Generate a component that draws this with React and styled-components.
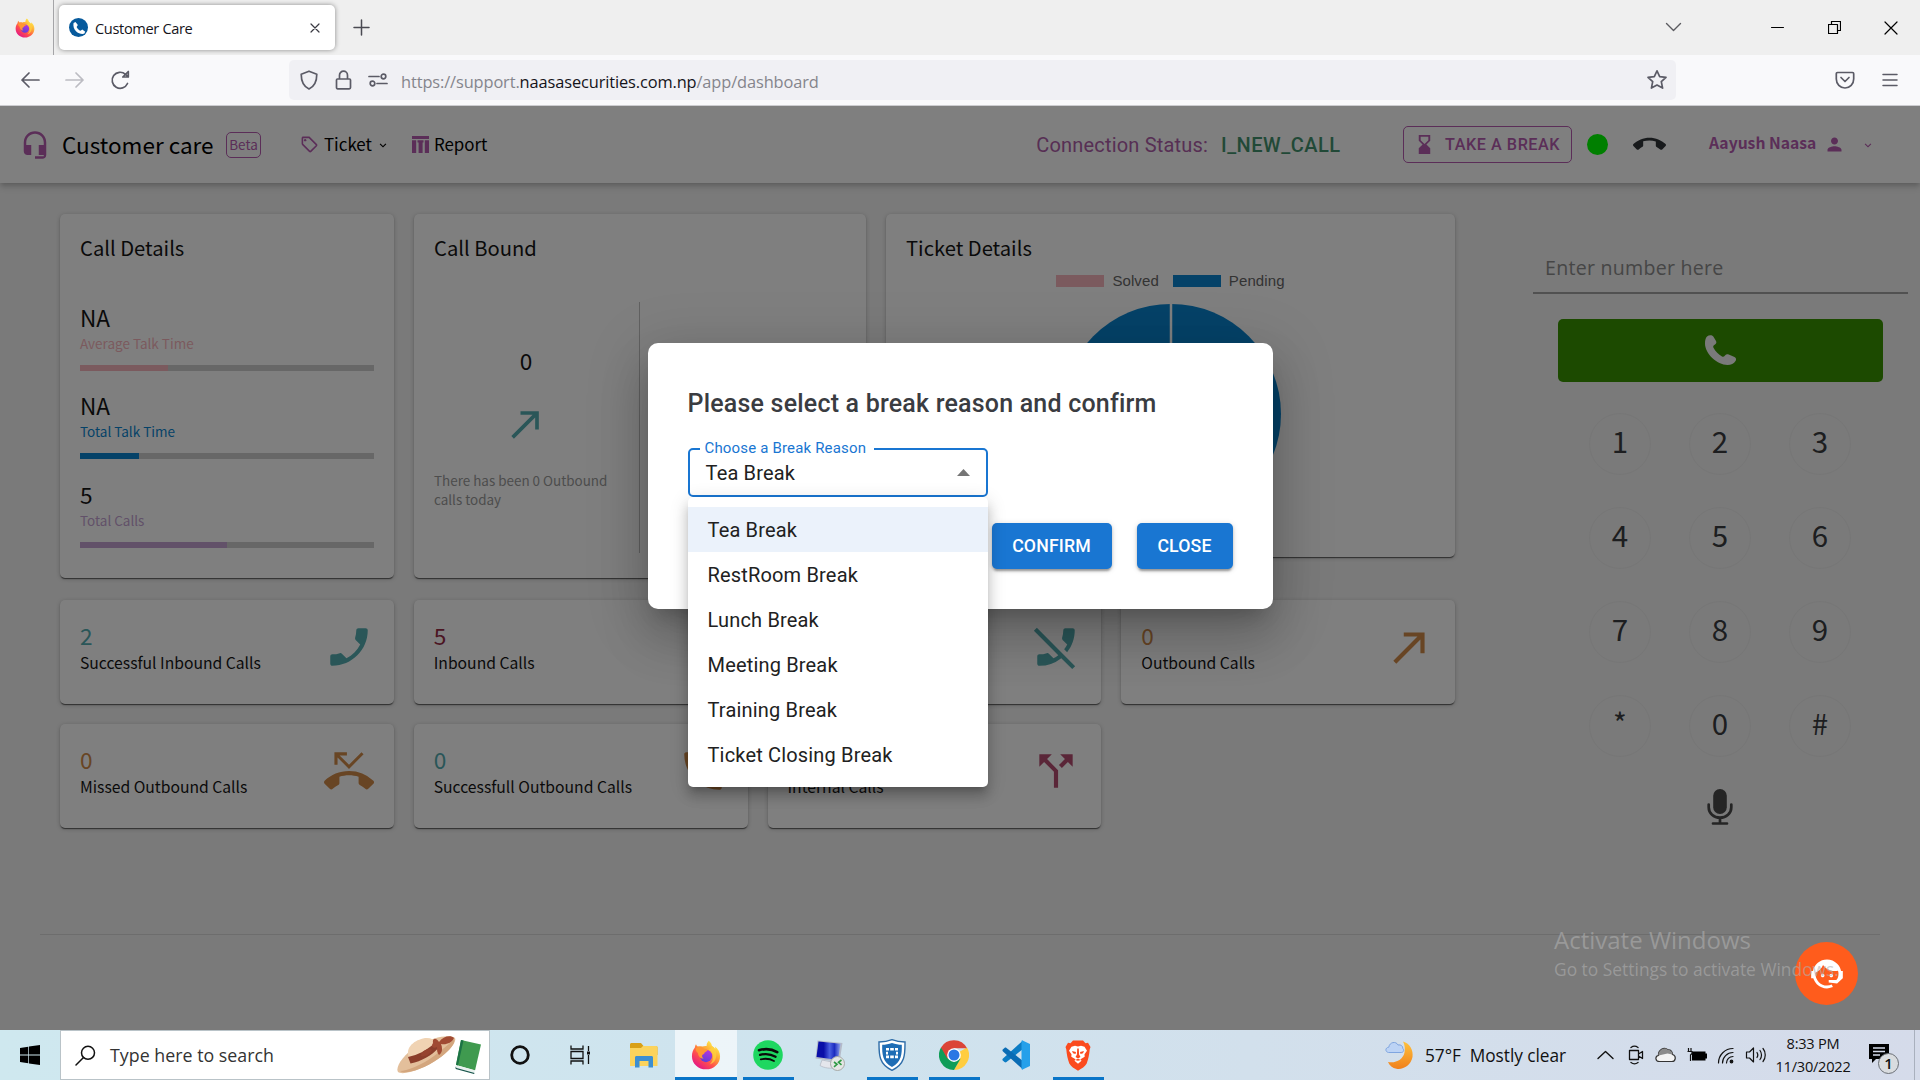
import React from "react";
import styled, { createGlobalStyle, css } from "styled-components";
import {
  MdHeadsetMic, MdOutlineSell, MdHourglassBottom, MdCallEnd, MdPerson, MdCall,
  MdPhoneEnabled, MdPhoneMissed, MdPhoneDisabled, MdCallMade, MdCallReceived,
  MdCallSplit,
} from "react-icons/md";
import { BiChevronDown } from "react-icons/bi";

const SOURCE = `"Noto Sans CJK SC", "Noto Sans", sans-serif`;
const SEGOE = `"Open Sans", "Noto Sans", sans-serif`;
const ROBOTO = `Roboto, "Liberation Sans", sans-serif`;
const PLUM = "#b65cb0";

const GlobalStyle = createGlobalStyle`
  * { box-sizing: border-box; }
  html, body { margin: 0; padding: 0; }
  body { width: 1920px; height: 1080px; overflow: hidden; }
  svg { display: block; flex: none; }
  button { border: 0; padding: 0; margin: 0; background: none; font: inherit; color: inherit; }
`;

const Screen = styled.div`
  width: 1920px;
  height: 1080px;
  display: flex;
  flex-direction: column;
  overflow: hidden;
  font-family: ${SEGOE};
`;

/* ---------- browser ---------- */
const TitleBar = styled.div`
  height: 55px;
  flex: none;
  display: flex;
  align-items: center;
  background: #efefef;
`;
const PinnedTab = styled.div`
  width: 54px;
  height: 55px;
  display: flex;
  align-items: center;
  padding-left: 15px;
  border-right: 1px solid #a5a5a8;
`;
const Tab = styled.div`
  width: 276px;
  height: 45px;
  margin-left: 5px;
  display: flex;
  align-items: center;
  padding: 0 15px 0 10px;
  background: #fff;
  border-radius: 5px;
  box-shadow: 0 0 5px rgba(0, 0, 0, 0.42);
`;
const TabTitle = styled.span`
  flex: 1;
  margin-left: 7px;
  font-size: 14.6px;
  letter-spacing: -0.35px;
  color: #15141a;
  padding-top: 1px;
`;
const NewTab = styled.div`
  margin-left: 18px;
  flex: 1;
`;
const WindowButtons = styled.div`
  display: flex;
  align-items: center;
  padding-right: 22px;
`;
const WinBtn = styled.button`
  margin-left: ${(p) => p.$gap}px;
`;
const NavBar = styled.div`
  height: 51px;
  flex: none;
  display: flex;
  align-items: center;
  background: #f9f9fb;
  border-bottom: 1px solid #ccccd0;
  padding: 0 22px 0 20px;
`;
const NavButtons = styled.div`
  display: flex;
  gap: 25px;
  width: 269px;
`;
const UrlBox = styled.div`
  width: 1387px;
  height: 40px;
  display: flex;
  align-items: center;
  background: #f0f0f4;
  border-radius: 5px;
  padding: 0 8px 0 10px;
  gap: 16px;
`;
const Url = styled.span`
  flex: 1;
  margin-left: -3px;
  padding-top: 2px;
  font-size: 16.4px;
  letter-spacing: -0.12px;
  color: #85858c;
  b { font-weight: 400; color: #15141a; }
`;
const NavRight = styled.div`
  flex: 1;
  display: flex;
  justify-content: flex-end;
  align-items: center;
  gap: 27px;
`;

/* ---------- page ---------- */
const Page = styled.div`
  position: relative;
  height: 924px;
  flex: none;
  display: flex;
  flex-direction: column;
  background: #f4f4f4;
  font-family: ${SOURCE};
  overflow: hidden;
`;
const Header = styled.header`
  height: 77px;
  flex: none;
  display: flex;
  align-items: center;
  background: #fff;
  padding: 0 45px 0 20px;
  box-shadow: 0 2px 5px -1px rgba(0, 0, 0, 0.2), 0 5px 6px rgba(0, 0, 0, 0.1);
  color: #000;
  z-index: 1;
`;
const Brand = styled.div`
  width: 164px;
  margin-left: 12px;
  font-size: 22.5px;
  line-height: 30px;
  padding-bottom: 2px;
`;
const Beta = styled.span`
  width: 35px;
  height: 26px;
  border: 1px solid ${PLUM};
  border-radius: 5px;
  color: ${PLUM};
  font-size: 13.5px;
  line-height: 22px;
  text-align: center;
`;
const MenuLink = styled.div`
  display: flex;
  align-items: center;
  margin-left: ${(p) => p.$ml}px;
  font-size: 16.9px;
  line-height: 24px;
`;
const MenuText = styled.span`
  margin: 0 ${(p) => p.$mr || 0}px 2px 5px;
`;
const Purple = styled.span`
  display: inline-flex;
  color: ${PLUM};
`;
const Status = styled.div`
  margin-left: auto;
  display: flex;
  gap: 13px;
  font-family: ${ROBOTO};
  font-size: 20px;
  color: #ae5ea9;
`;
const StatusLabel = styled.span`
  letter-spacing: 0.18px;
`;
const StatusValue = styled.span`
  width: 119px;
  font-weight: 500;
  letter-spacing: 0.5px;
  color: #43936e;
`;
const BreakButton = styled.button`
  width: 169px;
  height: 37px;
  margin: 0 15px 0 63px;
  padding-left: 9px;
  display: flex;
  align-items: center;
  gap: 9px;
  border: 1px solid ${PLUM};
  border-radius: 5px;
  color: ${PLUM};
  font-family: ${ROBOTO};
  font-size: 16.2px;
  font-weight: 500;
  letter-spacing: 0.55px;
  white-space: nowrap;
`;
const Online = styled.span`
  width: 21px;
  height: 21px;
  border-radius: 50%;
  background: #00ff00;
  margin-right: 25px;
`;
const User = styled.div`
  display: flex;
  align-items: center;
  width: 166px;
  margin-left: 43px;
  color: ${PLUM};
  font-size: 15.7px;
  font-weight: 700;
`;
const UserName = styled.span`
  width: 115px;
  line-height: 22px;
  padding-bottom: 4px;
  white-space: nowrap;
`;
const UserChevron = styled(BiChevronDown)`
  margin-left: 16px;
`;

const Body = styled.main`
  display: flex;
  height: 752px;
  margin: 0 40px;
  padding: 31px 0 0 20px;
  border-bottom: 1px solid #dadada;
`;
const Dashboard = styled.section`
  width: 1395px;
  display: flex;
  flex-direction: column;
`;
const TopRow = styled.div`
  display: grid;
  grid-template-columns: 334px 452px 569px;
  column-gap: 20px;
  align-items: start;
  height: 386px;
`;
const Card = styled.article`
  background: #fff;
  border-radius: 5px;
  box-shadow: 0 2px 1px -1px rgba(0, 0, 0, 0.4), 0 1px 1px rgba(0, 0, 0, 0.24), 0 1px 4px rgba(0, 0, 0, 0.22);
  color: #151515;
`;
const Panel = styled(Card)`
  height: ${(p) => p.$h}px;
  padding: 20px;
`;
const PanelTitle = styled.h2`
  margin: 0;
  font-size: 20.2px;
  line-height: 28px;
  font-weight: 400;
`;
const Metric = styled.div`
  height: 88.3px;
  &:first-of-type { margin-top: 42px; }
`;
const MetricValue = styled.div`
  font-size: 22.6px;
  line-height: 28px;
`;
const MetricLabel = styled.div`
  font-size: 13.5px;
  line-height: 23px;
  color: ${(p) => p.$c};
`;
const Track = styled.div`
  height: 6px;
  margin-top: 10px;
  background: #cfcfcf;
`;
const Fill = styled.div`
  height: 6px;
  width: ${(p) => p.$w}%;
  background: ${(p) => p.$c};
`;
const BoundBody = styled.div`
  display: flex;
  height: 251px;
  margin-top: 40px;
`;
const BoundHalf = styled.div`
  width: 206px;
  display: flex;
  flex-direction: column;
  align-items: flex-start;
  padding-top: 45px;
  border-right: 1px solid #c2c2c2;
`;
const BoundNum = styled.div`
  width: 184px;
  text-align: center;
  font-size: 22.6px;
  line-height: 28px;
`;
const BoundArrow = styled.div`
  width: 184px;
  display: flex;
  justify-content: center;
  margin-top: 27px;
  color: #54adb1;
`;
const BoundText = styled.p`
  width: 206px;
  margin: 25px 0 0;
  font-size: 13.45px;
  line-height: 19px;
  color: #9a9a9a;
`;
const Legend = styled.div`
  display: flex;
  align-items: center;
  justify-content: center;
  font: 15px "Liberation Sans", Arial, sans-serif;
  letter-spacing: 0.1px;
  height: 17px;
  margin-top: 10px;
  color: #666;
`;
const Swatch = styled.i`
  width: 48px;
  height: 12px;
  background: ${(p) => p.$c};
  margin: 0 8px 0 ${(p) => p.$ml || 0}px;
`;
const Pie = styled.svg`
  margin: 14px auto 0;
`;
const StatGrid = styled.div`
  display: grid;
  grid-template-columns: repeat(4, 1fr);
  gap: 20px;
  grid-auto-rows: 104px;
`;
const StatCard = styled(Card)`
  display: flex;
  justify-content: space-between;
  padding: 22px 20px 0;
`;
const StatText = styled.div`
  font-size: 15.7px;
  line-height: 26px;
`;
const StatNum = styled.div`
  height: 28px;
  font-size: 22.6px;
  line-height: 28px;
  color: ${(p) => p.$c};
`;
const StatIcon = styled.div`
  color: ${(p) => p.$c};
`;

/* ---------- dial pad ---------- */
const Dialer = styled.aside`
  width: 375px;
  flex: none;
  margin: 30px -28px 0 78px;
  display: flex;
  flex-direction: column;
  align-items: center;
`;
const NumberInput = styled.div`
  width: 100%;
  height: 50px;
  padding: 9px 12px 0;
  border-bottom: 2px solid #a2a2a2;
  font-family: ${SEGOE};
  font-size: 19.6px;
  line-height: 30px;
  letter-spacing: 0.25px;
  color: #8d8d8d;
`;
const CallButton = styled.button`
  width: 325px;
  height: 63px;
  margin-top: 25px;
  padding-bottom: 1px;
  display: flex;
  align-items: center;
  justify-content: center;
  background: #389400;
  border-radius: 5px;
  color: #f4f4f4;
`;
const Keys = styled.div`
  display: grid;
  grid-template-columns: repeat(3, 62px);
  column-gap: 38px;
  row-gap: 32px;
  margin: 31px 1px 0 0;
`;
const Key = styled.button`
  width: 62px;
  height: 62px;
  border: 1px solid #ededed;
  border-radius: 50%;
  display: flex;
  align-items: center;
  justify-content: center;
  font-size: 29.5px;
  line-height: 40px;
  padding-bottom: 8px;
  color: #3a3c40;
`;
const Mic = styled.div`
  margin: 32px 1px 0 0;
`;

/* ---------- overlays ---------- */
const Backdrop = styled.div`
  position: absolute;
  inset: 0;
  z-index: 2;
  display: flex;
  justify-content: center;
  align-items: flex-start;
  padding-top: 237px;
  background: rgba(0, 0, 0, 0.5);
  font-family: ${ROBOTO};
`;
const Dialog = styled.div`
  width: 625px;
  height: 266px;
  padding: 46px 40px 40px;
  background: #fff;
  border-radius: 10px;
  box-shadow: 0 14px 19px -9px rgba(0, 0, 0, 0.2), 0 30px 48px 4px rgba(0, 0, 0, 0.14), 0 11px 58px 10px rgba(0, 0, 0, 0.12);
`;
const DialogTitle = styled.h3`
  margin: 0;
  font-size: 25px;
  line-height: 30px;
  font-weight: 500;
  letter-spacing: 0.2px;
  white-space: nowrap;
  color: #3a3c41;
`;
const Select = styled.div`
  position: relative;
  width: 300px;
  height: 49px;
  margin-top: 29px;
  display: flex;
  align-items: center;
  justify-content: space-between;
  padding: 0 16px;
  border: 2px solid #1976d2;
  border-radius: 5px;
  font-size: 20px;
  letter-spacing: 0.17px;
  color: #212121;
`;
const FloatLabel = styled.span`
  position: absolute;
  top: -12px;
  left: 10px;
  padding: 0 8px 0 5px;
  background: #fff;
  font-size: 15px;
  line-height: 20px;
  letter-spacing: 0.17px;
  color: #1976d2;
`;
const Options = styled.ul`
  position: absolute;
  top: 47px;
  left: -2px;
  width: 300px;
  margin: 0;
  padding: 10px 0;
  list-style: none;
  background: #fff;
  border-radius: 5px;
  z-index: 3;
  box-shadow: 0 6px 6px -4px rgba(0, 0, 0, 0.2), 0 10px 12px 1px rgba(0, 0, 0, 0.14), 0 4px 18px 2px rgba(0, 0, 0, 0.12);
`;
const Option = styled.li`
  height: 45px;
  padding-left: 20px;
  line-height: 46px;
  ${(p) => p.$on && css`background: #ebf2fb;`}
`;
const Actions = styled.div`
  display: flex;
  justify-content: flex-end;
  gap: 25px;
  margin-top: 26px;
`;
const ActionButton = styled.button`
  height: 46px;
  width: ${(p) => p.$w}px;
  background: #1976d2;
  border-radius: 5px;
  color: #fff;
  font-size: 17.7px;
  font-weight: 500;
  letter-spacing: 0.15px;
  box-shadow: 0 4px 2px -2px rgba(0, 0, 0, 0.2), 0 2px 3px rgba(0, 0, 0, 0.2), 0 1px 6px rgba(0, 0, 0, 0.14);
`;
const Fab = styled.button`
  position: absolute;
  left: 1795px;
  top: 836px;
  width: 63px;
  height: 63px;
  border-radius: 50%;
  background: #ff5c1c;
  color: #fff;
  display: flex;
  align-items: center;
  justify-content: center;
  z-index: 3;
`;
const Watermark = styled.div`
  position: absolute;
  left: 1554px;
  top: 814px;
  z-index: 4;
  font-family: ${SEGOE};
  color: rgba(175, 175, 175, 0.6);
  white-space: nowrap;
`;
const WatermarkTitle = styled.div`
  font-size: 24px;
  line-height: 39px;
`;
const WatermarkText = styled.div`
  font-size: 17.4px;
  line-height: 20px;
`;

/* ---------- taskbar ---------- */
const Taskbar = styled.footer`
  height: 50px;
  flex: none;
  display: flex;
  align-items: stretch;
  background: linear-gradient(90deg, #cfe8ef 0%, #cfe3ee 45%, #d2e0ec 65%, #d5dbea 100%);
  color: #111;
`;
const Start = styled.div`
  width: 60px;
  display: flex;
  align-items: center;
  padding-left: 20px;
`;
const Search = styled.div`
  width: 430px;
  display: flex;
  align-items: center;
  padding: 0 5px 0 14px;
  background: #fff;
  border: 1px solid #b9c3c8;
  font-size: 17.8px;
  letter-spacing: 0.02px;
  color: #333;
`;
const SearchText = styled.span`
  flex: 1;
  margin-left: 14px;
`;
const TaskSlot = styled.div`
  width: ${(p) => p.$w || 62}px;
  display: flex;
  align-items: center;
  justify-content: center;
  background: ${(p) => (p.$active ? "rgba(255,255,255,.62)" : "transparent")};
`;
const Running = styled.div`
  width: ${(p) => p.$w}px;
  height: 50px;
  display: flex;
  align-items: center;
  justify-content: center;
  border-bottom: 3px solid ${(p) => (p.$on ? "#0a75c8" : "transparent")};
  padding-top: 3px;
`;
const Tray = styled.div`
  flex: 1;
  display: flex;
  align-items: center;
  justify-content: flex-end;
`;
const Weather = styled.div`
  display: flex;
  align-items: center;
  font-size: 17.3px;
  gap: 11px;
  letter-spacing: -0.05px;
  width: 212px;
  white-space: nowrap;
`;
const TrayIcons = styled.div`
  display: flex;
  align-items: center;
  gap: 10.5px;
  width: 172px;
`;
const MeetSlot = styled.span`
  padding-left: 3px;
`;
const Clock = styled.div`
  width: 88px;
  text-align: center;
  font-size: 14.6px;
  letter-spacing: -0.25px;
  line-height: 23px;
`;
const Notifications = styled.div`
  width: 57px;
  padding: 8px 0 0 12px;
`;
const ShowDesktop = styled.div`
  width: 6px;
  align-self: stretch;
  border-left: 1px solid #a9b0bd;
`;

/* ---------- drawings ---------- */
const Line = ({ w, h, d, c = "#5b5b66", s = 1.7, children, fill = "none" }) => (
  <svg width={w} height={h} viewBox={`0 0 ${w} ${h}`} fill={fill} stroke={c} strokeWidth={s} strokeLinecap="round" strokeLinejoin="round">
    {d && <path d={d} />}
    {children}
  </svg>
);

const Firefox = ({ size, id }) => (
  <svg width={size} height={size} viewBox="0 0 32 32">
    <defs>
      <linearGradient id={`${id}a`} x1=".85" y1=".1" x2=".2" y2=".95">
        <stop offset="0" stopColor="#fff44f" />
        <stop offset=".35" stopColor="#ffa436" />
        <stop offset=".65" stopColor="#ff4f4d" />
        <stop offset="1" stopColor="#e31587" />
      </linearGradient>
      <linearGradient id={`${id}b`} x1=".7" y1="0" x2=".3" y2="1">
        <stop offset="0" stopColor="#b833e1" />
        <stop offset="1" stopColor="#5b3fd6" />
      </linearGradient>
    </defs>
    <path fill={`url(#${id}a)`} d="M19 .8c2.400 2 3.200 4.100 3.400 5.700 1.600.8 2.700 2 3.300 3.100.3-1 .1-2.100-.2-2.800C29 9.200 31 13 31 17.200 31 25 24.400 31.300 16 31.300S1 25 1 17.200c0-4 1.400-7 3-9 .2-1.500.7-2.900 1.300-3.800.5 1.200 1.200 2 2 2.600 1.500-.5 3.100-.5 4.600 0 2.200-.8 4.100-.7 4.800-.5C16.500 4.600 17.300 2.300 19 .8z" />
    <circle cx="16" cy="17" r="6.600" fill={`url(#${id}b)`} />
    <path fill="#ff9633" d="M5 9c3-2.500 7-1.500 9 .8 1.500.2 3.300.1 3.600.9.2 1-1.800 2-3 2.500-.4 1.700-1.400 1.800-2.600 2.800-.6 1.600.3 3 1.500 4-3.500-.3-6-3-6-6.200C5.500 12.500 5 10.500 5 9z" />
    <path fill="#ffd23f" opacity=".75" d="M22.400 6.500c4.500 3 6 9.500 3.500 14.500-1.300 2.600-3.600 4.300-6 5 3.600-3 4.400-8 2.600-12-.9-2-2.500-3.200-4-4 2 .1 3.500-1.300 3.900-3.500z" />
  </svg>
);

const Favicon = () => (
  <svg width="19" height="19" viewBox="0 0 24 24">
    <circle cx="12" cy="12" r="12" fill="#075a9c" />
    <path fill="#fff" transform="translate(3 3) scale(.78)" d="M6.600 2.500 3.500 4.200C2.600 9 4 14 7.500 17.600c3.600 3.500 8.500 5 13.200 4.200l1.700-3.200-4.600-3.800-3 2c-2.800-1.200-5-3.300-6.300-6.200l2-3z" />
  </svg>
);

const ReportIcon = () => (
  <svg width="17" height="17" viewBox="0 0 17 17" fill="currentColor">
    <path d="M0 0h17v3H0zM0 4.200h4.200V17H0zM5.500 4.200h6v2.200H10.600V17H6.600V6.400H5.500zM12.800 4.200H17V17h-4.200z" />
  </svg>
);

const Handset = () => (
  <svg width="31" height="30" viewBox="0 0 31 30" fill="currentColor">
    <path d="M2 1.500C4-.3 7-.2 8.300 1.500L11 6c.8 1.400.2 2.500-1 3.500-1.500 1.100-2.200 1.700-1.500 3.300 2 3.700 5 6.700 8.500 8.700 1.200.6 2 .2 3-1 1-1.300 2.200-1.700 3.700-1L29.500 22c1.600.8 2 2.200 1 4-1.500 2.700-4.500 4-8 4C12 30 0 18.500 0 8.500 0 5.500.5 3 2 1.500z" />
  </svg>
);

const MicIcon = () => (
  <svg width="26" height="36" viewBox="0 0 26 36" fill="none" stroke="#4a4a4a" strokeWidth="2.700" strokeLinecap="round">
    <rect x="6.200" y="0" width="13.600" height="25" rx="6.800" fill="#4a4a4a" stroke="none" />
    <path d="M1.700 15.500v2.700c0 6 5 10.500 11.300 10.500s11.300-4.500 11.300-10.500v-2.700M13 28.700v5.600M6 34.500h14" />
  </svg>
);

const AgentIcon = () => (
  <svg width="38" height="38" viewBox="0 0 24 24" fill="currentColor">
    <path d="M18.720 14.760C19.070 13.910 19.260 13 19.260 12C19.260 11.280 19.150 10.590 18.960 9.950C18.310 10.100 17.630 10.180 16.920 10.180C13.860 10.180 11.150 8.670 9.500 6.340C8.610 8.500 6.910 10.260 4.770 11.220C4.730 11.470 4.730 11.740 4.730 12A7.270 7.270 0 0 0 12 19.270C13.050 19.270 14.060 19.040 14.970 18.630C15.540 19.720 15.800 20.260 15.780 20.260C14.140 20.810 12.870 21.080 12 21.080C9.580 21.080 7.270 20.130 5.570 18.420C4.530 17.380 3.760 16.110 3.330 14.730H2V10.180H3.090C3.930 6.040 7.600 2.920 12 2.920C14.400 2.920 16.710 3.870 18.420 5.580C19.690 6.840 20.540 8.450 20.890 10.180H22V14.730H21.940L18.380 18L13.080 17.400V15.730H17.910L18.720 14.760M9.270 11.770C9.570 11.770 9.860 11.890 10.070 12.110C10.280 12.320 10.400 12.610 10.400 12.910C10.400 13.210 10.280 13.500 10.070 13.710C9.860 13.920 9.570 14.040 9.270 14.040C8.640 14.040 8.130 13.540 8.130 12.910C8.130 12.280 8.640 11.770 9.270 11.770M14.720 11.770C15.350 11.770 15.850 12.280 15.850 12.910C15.850 13.540 15.350 14.040 14.720 14.040C14.090 14.040 13.580 13.540 13.580 12.910A1.140 1.140 0 0 1 14.720 11.770Z" />
  </svg>
);

const Hat = () => (
  <svg width="87" height="38" viewBox="0 0 87 38">
    <path d="M1 36C-2 31 6 19 20 10 36 .5 54-2 58 2c2 4-6 13-17 21C27 33 6 40 1 36z" fill="#e3bf9b" />
    <path d="M3 35c6 0 22-6 34-15S55 5 57 3c2 5-6 13-16 20C27 33 8 39 3 35z" fill="#d3a67e" />
    <path d="M12 22C8 12 16 5 26 2.500c6-1.500 11 .5 13 4.500L18 25z" fill="#f0d3b3" />
    <path d="M11 21c10-2 19-7 27-14l3.500 5C34 20 25 25 13.500 27.500z" fill="#8b3e2b" />
    <path d="M36 7c-1-6 4-5 6-1 4-6 12-7 15-4-2 5-8 7-13 6 2 5 1 9-2 11-2-2-2-5-2-8-3 2-7 0-4-4z" fill="#a04a33" />
    <path d="M33 13c-5 0-9 3-9 7 5 1 9-2 11-6z" fill="#96432f" />
    <path d="m64 4 20 4.500-6 26-19-5.500z" fill="#3f9a4f" />
    <path d="m59 29 19 5.300-.8 3L58.500 32z" fill="#e8f1ee" />
    <path d="m58.500 30.500.2 2.500 18.300 5 .6-1-18-5z" fill="#17544a" />
    <path d="m64 4 2.500.5-5.500 25-2-.7z" fill="#1c7345" />
  </svg>
);

const FolderIcon = () => (
  <svg width="28" height="25" viewBox="0 0 28 25">
    <path d="M0 1.500C0 .7.700 0 1.500 0H11l2.500 3H26c1 0 1.500.6 1.500 1.500V12H0z" fill="#d9a016" />
    <path d="M0 5h11l2-2h13c1 0 1.500.6 1.500 1.500V23H0z" fill="#fbd35c" />
    <path d="M5 24.500V14.500c0-1 .7-1.500 1.500-1.500h15c.8 0 1.500.5 1.500 1.500v10h-4.500V18h-9v6.500z" fill="#3d8fd1" />
  </svg>
);

const SpotifyIcon = () => (
  <svg width="30" height="30" viewBox="0 0 30 30" fill="none" stroke="#0a0a0a" strokeLinecap="round">
    <circle cx="15" cy="15" r="14.800" fill="#1ed760" stroke="none" />
    <path strokeWidth="2.700" d="M6 10.200c6-1.700 13-1.100 18.200 1.900" />
    <path strokeWidth="2.200" d="M7 14.900c5.300-1.400 11-.8 15.600 1.900" />
    <path strokeWidth="1.800" d="M7.800 19.300c4.600-1 9.200-.6 13.200 1.700" />
  </svg>
);

const RemoteIcon = () => (
  <svg width="30" height="31" viewBox="0 0 30 31">
    <defs>
      <linearGradient id="crt" x1="0" y1="0" x2="1" y2="0">
        <stop offset=".3" stopColor="#0a0fa8" />
        <stop offset=".55" stopColor="#4a5fe0" />
        <stop offset=".75" stopColor="#1c2cc0" />
        <stop offset="1" stopColor="#8ea2ee" />
      </linearGradient>
    </defs>
    <path d="M7 20l10 2 4 5.500c-5 1.500-12 .5-16-2z" fill="#e4e6ec" stroke="#a9adb8" strokeWidth=".6" />
    <path d="M2.500.5 27.500 3 24.500 22 .5 18.500z" fill="#b4bac8" />
    <path d="M3.500 1.500 25.500 3.800 23 20 1.500 17z" fill="url(#crt)" />
    <circle cx="22.500" cy="23.500" r="7" fill="#e4e6e4" stroke="#a7aaa7" />
    <path d="m19 22 3 2.300-3 2.500M26.500 20l-3 2.300 3 2.500" stroke="#2f9a43" strokeWidth="1.600" fill="none" />
  </svg>
);

const ShieldIcon = () => (
  <svg width="28" height="32" viewBox="0 0 28 32">
    <path d="M14 .7c5 2 9 2.300 13 2.300 0 12 .5 22-13 28.300C.5 25 1 15 1 3c4 0 8-.3 13-2.300z" fill="#fff" stroke="#2d6ca8" strokeWidth="1.400" />
    <path d="M14 4c3.500 1.300 6.500 1.700 9.800 1.800C24 15 23.500 23 14 28 4.500 23 4 15 4.200 5.800 7.500 5.700 10.500 5.300 14 4z" fill="#1e6db5" />
    <path fill="#fff" d="M8 9h3v2.600H8zM12.200 9h3.600v2.600h-3.600zM17 9h3v2.600h-3zM8 12.800h2v2.600H8zM18 12.800h2v2.600h-2zM8 16.600h3v2.600H8zM12.200 16.600h3.600v2.600h-3.600zM17 16.600h3v2.600h-3z" />
  </svg>
);

const ChromeIcon = () => (
  <svg width="30" height="30" viewBox="0 0 48 48">
    <path d="M24 24 44.800 12A24 24 0 0 1 24 48l10-18z" fill="#ffcd40" />
    <path d="M24 24 3.200 12A24 24 0 0 0 24 48l10.400-18z" fill="#0f9d58" />
    <path d="M24 13h20.800A24 24 0 0 0 3.200 12L13.600 30z" fill="#db4437" />
    <circle cx="24" cy="24" r="11" fill="#fff" />
    <circle cx="24" cy="24" r="8.800" fill="#2a78e4" />
  </svg>
);

const CodeIcon = () => (
  <svg width="30" height="30" viewBox="0 0 30 30">
    <path d="M22 .5 2 18.500c-.8.700-.8 1.600 0 2.300l1.500 1.300c.7.500 1.300.5 2 0L22 9z" fill="#0c7cc4" />
    <path d="M22 29.500 2 11.500c-.8-.7-.8-1.600 0-2.300l1.500-1.300c.7-.5 1.300-.5 2 0L22 21z" fill="#0a6cb4" />
    <path d="M21 .3 29 4v22l-8 3.700c-.4-.3-.5-.8-.5-1.400V1.700c0-.6.100-1.100.5-1.400z" fill="#25a0ea" />
  </svg>
);

const BraveIcon = () => (
  <svg width="26" height="31" viewBox="0 0 26 31">
    <path d="M8 .5h10l2.500 2.800 2.500-.5L25.500 7l-.8 2.500c-.4 5-1.500 10-3 14-1.500 3-5 5-8.700 7.300C9.300 28.500 5.800 26.500 4.300 23.500c-1.500-4-2.600-9-3-14L.5 7 3 2.800l2.500.5z" fill="#fb4a1e" />
    <path fill="#fff" d="m13 6.500 3-.8 3.500 1 2.500 4-2.500 3.500.2 2.500-4.200 2.500 1 1.500-3.500 3-3.500-3 1-1.500-4.200-2.500.2-2.500L4 10.700l2.500-4 3.500-1z" />
    <path fill="#fb4a1e" d="m7 11 4 1-.5 2-2.500-.8zM19 11l-4 1 .5 2 2.500-.8zM12.200 8.500h1.600l.3 6 1.400 2.500L13 18.500 10.500 17l1.400-2.500zM10 20l3-1.200 3 1.200-3 .8z" />
  </svg>
);

const MoonIcon = () => (
  <svg width="29" height="31" viewBox="0 0 29 31">
    <defs>
      <linearGradient id="moon" x1="0" y1="0" x2="0" y2="1">
        <stop offset="0" stopColor="#ffc23c" />
        <stop offset="1" stopColor="#f0801c" />
      </linearGradient>
    </defs>
    <path d="M18 1.500c7 2 10.500 9 9.500 15.500C26 25 18.500 30 11.500 28.800 7.500 28 4.500 25.500 3 22c8 1.500 15-2.500 16.500-9.500.8-4 .2-8-1.500-11z" fill="url(#moon)" />
    <path d="M3.500 12.500C0 12 0 7.500 3.800 7.200 4.500 2 11 .8 13 5c3-.7 5 1.200 4.800 3.400 1.700 1.600.7 4.100-1.500 4.100z" fill="#bcd3f5" stroke="#7fa5e0" />
  </svg>
);

const stats = [
  { n: "2", t: "Successful Inbound Calls", c: "#54adb1", I: MdPhoneEnabled },
  { n: "5", t: "Inbound Calls", c: "#962a44", I: MdCallReceived },
  { c: "#54adb1", I: MdPhoneDisabled },
  { n: "0", t: "Outbound Calls", c: "#d08a48", I: MdCallMade },
  { n: "0", t: "Missed Outbound Calls", c: "#d08a48", I: MdPhoneMissed },
  { n: "0", t: "Successfull Outbound Calls", c: "#54adb1", ic: "#d08a48", I: MdCall },
  { t: "Internal Calls", c: "#b54c70", I: MdCallSplit },
];
const metrics = [
  { v: "NA", t: "Average Talk Time", c: "#f7b5bc", w: 30 },
  { v: "NA", t: "Total Talk Time", c: "#0a85d0", w: 20 },
  { v: "5", t: "Total Calls", c: "#c4a2d2", w: 50 },
];
const keys = ["1", "2", "3", "4", "5", "6", "7", "8", "9", "*", "0", "#"];
const reasons = ["Tea Break", "RestRoom Break", "Lunch Break", "Meeting Break", "Training Break", "Ticket Closing Break"];
const apps = [
  { I: FolderIcon },
  { I: () => <Firefox size={30} id="task" />, on: true, active: true },
  { I: SpotifyIcon, on: true },
  { I: RemoteIcon },
  { I: ShieldIcon, on: true },
  { I: ChromeIcon, on: true },
  { I: CodeIcon },
  { I: BraveIcon, on: true },
];

const Browser = () => (
  <>
    <TitleBar>
      <PinnedTab><Firefox size={20} id="pin" /></PinnedTab>
      <Tab>
        <Favicon />
        <TabTitle>Customer Care</TabTitle>
        <Line w={10} h={10} d="M1 1l8 8M9 1l-8 8" c="#3a3a42" s={1.200} />
      </Tab>
      <NewTab><Line w={17} h={17} d="M8.500 1v15M1 8.500h15" c="#4a4a52" s={1.500} /></NewTab>
      <WindowButtons>
        <Line w={17} h={11} d="M1.500 1.500l7 7 7-7" c="#5b5b60" s={1.400} />
        <WinBtn $gap={89}><Line w={13} h={13} d="M.5 6.500h12" c="#000" s={1} /></WinBtn>
        <WinBtn $gap={44}><Line w={13} h={13} d="M.5 3.500h9v9h-9zM3.500 3.500v-3h9v9h-3" c="#000" s={1.200} /></WinBtn>
        <WinBtn $gap={43}><Line w={14} h={14} d="M1 1l12 12M13 1l-12 12" c="#000" s={1.200} /></WinBtn>
      </WindowButtons>
    </TitleBar>
    <NavBar>
      <NavButtons>
        <Line w={20} h={20} d="M19 10H2M9 3l-7 7 7 7" />
        <Line w={20} h={20} d="M1 10h17M11 3l7 7-7 7" c="#bcbcc2" />
        <Line w={20} h={20} d="M17.500 13.500A8 8 0 1 1 15.500 4.300L18 6.500M18.300 1.500v5.500h-5.500z" />
      </NavButtons>
      <UrlBox>
        <Line w={20} h={20} d="M10 1.200l7.800 3c0 7-2 12-7.800 14.800C4.200 16.200 2.200 11.200 2.200 4.200z" />
        <Line w={17} h={20} d="M2.500 9h12c.8 0 1 .4 1 1v7.500c0 .8-.4 1.300-1.200 1.300H2.700c-.8 0-1.200-.5-1.200-1.300V10c0-.6.300-1 1-1zM4.500 9V5.200a4 4 0 0 1 8 0V9" />
        <Line w={20} h={16}>
          <path d="M1 4.500h10M9 11.500h10" /><circle cx="15.500" cy="4.500" r="2.300" /><circle cx="4.500" cy="11.500" r="2.300" />
        </Line>
        <Url>https://support.<b>naasasecurities.com.np</b>/app/dashboard</Url>
        <Line w={22} h={22} d="M11 1.800l2.700 5.800 6.300.8-4.700 4.300 1.300 6.400L11 16l-5.600 3.100 1.300-6.400L2 8.400l6.300-.8z" />
      </UrlBox>
      <NavRight>
        <Line w={20} h={18} d="M2.500 1.500h15c.8 0 1.200.4 1.200 1.200V8c0 5-3.800 9-8.700 9S1.300 13 1.300 8V2.700c0-.8.400-1.200 1.200-1.200zM6 6.500l4 4 4-4" />
        <Line w={16} h={14} d="M1 1.500h14M1 7h14M1 12.500h14" s={1.500} />
      </NavRight>
    </NavBar>
  </>
);

const TopBar = () => (
  <Header>
    <Purple><MdHeadsetMic size={30} /></Purple>
    <Brand>Customer care</Brand>
    <Beta>Beta</Beta>
    <MenuLink $ml={39}>
      <Purple><MdOutlineSell size={19} /></Purple>
      <MenuText $mr={4}>Ticket</MenuText>
      <BiChevronDown size={14} />
    </MenuLink>
    <MenuLink $ml={22}>
      <Purple><ReportIcon /></Purple>
      <MenuText>Report</MenuText>
    </MenuLink>
    <Status>
      <StatusLabel>Connection Status:</StatusLabel>
      <StatusValue>I_NEW_CALL</StatusValue>
    </Status>
    <BreakButton><MdHourglassBottom size={23} />TAKE A BREAK</BreakButton>
    <Online />
    <MdCallEnd size={33} color="#303438" />
    <User>
      <UserName>Aayush Naasa</UserName>
      <MdPerson size={21} />
      <UserChevron size={14} />
    </User>
  </Header>
);

export default function App() {
  return (
    <Screen>
      <GlobalStyle />
      <Browser />
      <Page>
        <TopBar />
        <Body>
          <Dashboard>
            <TopRow>
              <Panel $h={364}>
                <PanelTitle>Call Details</PanelTitle>
                {metrics.map((m) => (
                  <Metric key={m.t}>
                    <MetricValue>{m.v}</MetricValue>
                    <MetricLabel $c={m.c}>{m.t}</MetricLabel>
                    <Track><Fill $w={m.w} $c={m.c} /></Track>
                  </Metric>
                ))}
              </Panel>
              <Panel $h={364}>
                <PanelTitle>Call Bound</PanelTitle>
                <BoundBody>
                  <BoundHalf>
                    <BoundNum>0</BoundNum>
                    <BoundArrow><MdCallMade size={44} /></BoundArrow>
                    <BoundText>There has been 0 Outbound<br />calls today</BoundText>
                  </BoundHalf>
                </BoundBody>
              </Panel>
              <Panel $h={343}>
                <PanelTitle>Ticket Details</PanelTitle>
                <Legend>
                  <Swatch $c="#f7b5bc" />Solved<Swatch $c="#0a85d0" $ml={14} />Pending
                </Legend>
                <Pie width="222" height="222" viewBox="-111 -111 222 222">
                  <circle r="110" fill="#0a85d0" />
                  <path d="M0 0V-111" stroke="#fff" strokeWidth="2.500" />
                </Pie>
              </Panel>
            </TopRow>
            <StatGrid>
              {stats.map(({ n, t, c, ic, I }, i) => (
                <StatCard key={i}>
                  <StatText><StatNum $c={c}>{n}</StatNum>{t}</StatText>
                  <StatIcon $c={ic || c}><I size={50} /></StatIcon>
                </StatCard>
              ))}
            </StatGrid>
          </Dashboard>
          <Dialer>
            <NumberInput>Enter number here</NumberInput>
            <CallButton><Handset /></CallButton>
            <Keys>{keys.map((k) => <Key key={k}>{k}</Key>)}</Keys>
            <Mic><MicIcon /></Mic>
          </Dialer>
        </Body>
        <Backdrop>
          <Dialog>
            <DialogTitle>Please select a break reason and confirm</DialogTitle>
            <Select>
              <FloatLabel>Choose a Break Reason</FloatLabel>
              Tea Break
              <svg width="13" height="7" viewBox="0 0 13 7"><path d="M0 7 6.500 0 13 7z" fill="#757575" /></svg>
              <Options>
                {reasons.map((r, i) => <Option key={r} $on={i === 0}>{r}</Option>)}
              </Options>
            </Select>
            <Actions>
              <ActionButton $w={120}>CONFIRM</ActionButton>
              <ActionButton $w={96}>CLOSE</ActionButton>
            </Actions>
          </Dialog>
        </Backdrop>
        <Fab><AgentIcon /></Fab>
        <Watermark>
          <WatermarkTitle>Activate Windows</WatermarkTitle>
          <WatermarkText>Go to Settings to activate Windows.</WatermarkText>
        </Watermark>
      </Page>
      <Taskbar>
        <Start>
          <svg width="20" height="20" viewBox="0 0 20 20"><path d="M0 2.900 8.300 1.700v7.900H0zM9 1.600 20 0v9.600H9zM0 10.400h8.300v7.900L0 17.100zM9 10.400h11V20L9 18.400z" /></svg>
        </Start>
        <Search>
          <Line w={21} h={21} c="#111" s={1.500}><circle cx="13" cy="7.800" r="6.500" /><path d="M8.500 12.500 1 20" /></Line>
          <SearchText>Type here to search</SearchText>
          <Hat />
        </Search>
        <TaskSlot $w={60}><Line w={20} h={20} c="#111" s={2.800}><circle cx="10" cy="10" r="8.300" /></Line></TaskSlot>
        <TaskSlot $w={60}>
          <svg width="21" height="20" viewBox="0 0 21 20" fill="none" stroke="#111" strokeWidth="1.300">
            <path d="M1 .5v3.500h12V.5M1 19.500V16h12v3.500M1 6.500h12v7H1zM18.500 1v5M18.500 10v9" />
            <path d="M17 6.500h3v3h-3z" fill="#111" stroke="none" />
          </svg>
        </TaskSlot>
        <TaskSlot $w={3} />
        {apps.map(({ I, on, active }, i) => (
          <TaskSlot key={i} $active={active}>
            <Running $on={on} $w={active ? 62 : 51}><I /></Running>
          </TaskSlot>
        ))}
        <Tray>
          <Weather><MoonIcon /><span>57°F&nbsp;&nbsp;Mostly clear</span></Weather>
          <TrayIcons>
            <Line w={17} h={10} d="M1 8.500l7.500-7 7.500 7" c="#111" s={1.400} />
            <MeetSlot>
              <Line w={17} h={20} c="#111" s={1.300} d="M1.500 5.500h9v9h-9zM10.500 9l4-2.500v7l-4-2.500M3 2.500c2-1.500 5-1.500 7 0M3 17.500c2 1.500 5 1.500 7 0" />
            </MeetSlot>
            <svg width="21" height="16" viewBox="0 0 21 16"><path d="M4.500 14.500C0 14.500-.2 9 3.500 8.500 3 3.500 9-1 13 3c3-.3 4.500 2 4.500 4.500 4 1 3.500 7-.5 7z" fill="#f3f3f3" stroke="#333" strokeWidth="1.200" /><path d="M3.500 8.500C3 3.500 9-1 13 3c3-.3 4.500 2 4.500 4.500l-5-1z" fill="#8b8b8b" /></svg>
            <svg width="20" height="15" viewBox="0 0 20 15"><path d="M5 3.500h13.500v2H20v5h-1.500v2H5z" /><path d="M1.500 0v3M4 0v3M.5 3.500h4.500v2L3.500 7v6" stroke="#111" fill="none" strokeWidth="1.200" /></svg>
            <Line w={17} h={17} c="#111" s={1.200} d="M1.500 16A14.500 14.500 0 0 1 16 1.500M5.500 16A10.500 10.500 0 0 1 16 5.500M9.500 16A6.500 6.500 0 0 1 16 9.500"><circle cx="14.500" cy="14.500" r="1.300" fill="#111" /></Line>
            <Line w={22} h={18} c="#111" s={1.200} d="M1.500 6h3l4-4v14l-4-4h-3zM12 6.500c1 1.500 1 3.500 0 5M15 4.500c2 2.500 2 6.500 0 9M18 2.500c3 3.500 3 9.500 0 13" />
          </TrayIcons>
          <Clock>8:33 PM<br />11/30/2022</Clock>
          <Notifications>
            <svg width="32" height="36" viewBox="0 0 32 36">
              <path d="M0 3h20v15H7l-4 4v-4H0z" />
              <path d="M4 7h12M4 10.500h12M4 14h7" stroke="#d5dbea" strokeWidth="1.500" />
              <circle cx="19.500" cy="22.500" r="10" fill="#d9dcdf" stroke="#6a6f75" />
              <text x="19.500" y="28" textAnchor="middle" fontSize="15" fontFamily="Open Sans, sans-serif" fontWeight="600" fill="#111">1</text>
            </svg>
          </Notifications>
          <ShowDesktop />
        </Tray>
      </Taskbar>
    </Screen>
  );
}
